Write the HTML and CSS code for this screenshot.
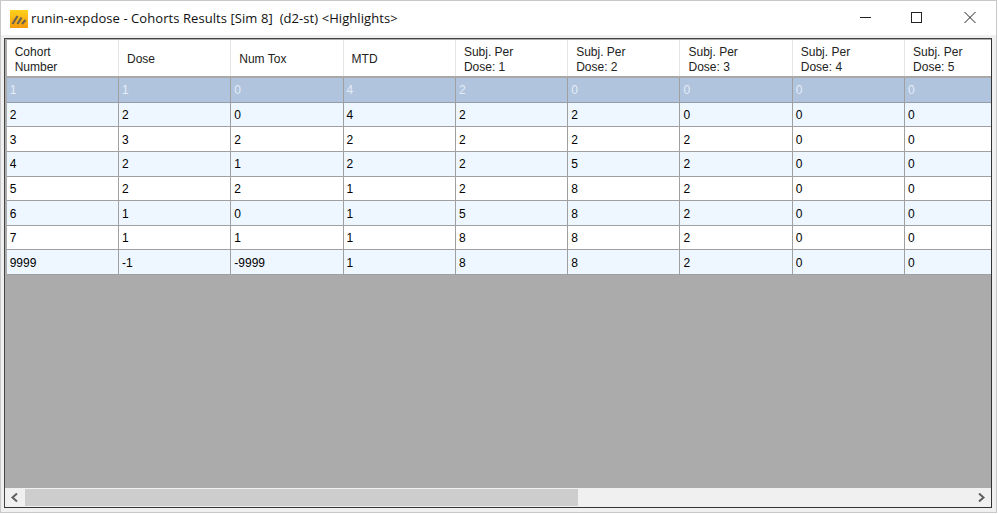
FILE: index.html
```html
<!DOCTYPE html>
<html lang="en">
<head>
<meta charset="utf-8">
<title>runin-expdose - Cohorts Results</title>
<link rel="stylesheet" href="styles.css">
</head>
<body>
<div class="window">
  <header class="titlebar">
    <svg class="app-icon" width="18" height="18" viewBox="0 0 18 18" aria-hidden="true">
      <defs><linearGradient id="g" x1="0" y1="0" x2="0" y2="1"><stop offset="0" stop-color="#ffd21c"/><stop offset="1" stop-color="#f59a0c"/></linearGradient></defs>
      <rect width="18" height="18" fill="url(#g)"/>
      <path d="M2.5 14 L7.5 6 M7.5 14 L11.5 7.5 M12 14 L15.5 10" stroke="#6b6250" stroke-width="2.2" fill="none"/>
    </svg>
    <span class="title">runin-expdose - Cohorts Results [Sim 8]&nbsp; (d2-st) &lt;Highlights&gt;</span>
    <div class="caption-buttons">
      <svg class="cap" width="51" height="34" viewBox="0 0 51 34" aria-hidden="true"><path d="M18 16.5 H29" stroke="#222" fill="none"/></svg>
      <svg class="cap" width="51" height="34" viewBox="0 0 51 34" aria-hidden="true"><rect x="18.5" y="11.5" width="10" height="10" stroke="#222" fill="none"/></svg>
      <svg class="cap" width="51" height="34" viewBox="0 0 51 34" aria-hidden="true"><path d="M20.5 11 L31.5 22 M31.5 11 L20.5 22" stroke="#222" fill="none"/></svg>
    </div>
  </header>
  <main class="frame">
    <div class="grid">
      <div class="row head">
        <div class="cell"><span>Cohort<br>Number</span></div>
        <div class="cell"><span>Dose</span></div>
        <div class="cell"><span>Num Tox</span></div>
        <div class="cell"><span>MTD</span></div>
        <div class="cell"><span>Subj. Per<br>Dose: 1</span></div>
        <div class="cell"><span>Subj. Per<br>Dose: 2</span></div>
        <div class="cell"><span>Subj. Per<br>Dose: 3</span></div>
        <div class="cell"><span>Subj. Per<br>Dose: 4</span></div>
        <div class="cell"><span>Subj. Per<br>Dose: 5</span></div>
      </div>
      <div class="row selected"><div class="cell">1</div><div class="cell">1</div><div class="cell">0</div><div class="cell">4</div><div class="cell">2</div><div class="cell">0</div><div class="cell">0</div><div class="cell">0</div><div class="cell">0</div></div>
      <div class="row alt"><div class="cell">2</div><div class="cell">2</div><div class="cell">0</div><div class="cell">4</div><div class="cell">2</div><div class="cell">2</div><div class="cell">0</div><div class="cell">0</div><div class="cell">0</div></div>
      <div class="row"><div class="cell">3</div><div class="cell">3</div><div class="cell">2</div><div class="cell">2</div><div class="cell">2</div><div class="cell">2</div><div class="cell">2</div><div class="cell">0</div><div class="cell">0</div></div>
      <div class="row alt"><div class="cell">4</div><div class="cell">2</div><div class="cell">1</div><div class="cell">2</div><div class="cell">2</div><div class="cell">5</div><div class="cell">2</div><div class="cell">0</div><div class="cell">0</div></div>
      <div class="row"><div class="cell">5</div><div class="cell">2</div><div class="cell">2</div><div class="cell">1</div><div class="cell">2</div><div class="cell">8</div><div class="cell">2</div><div class="cell">0</div><div class="cell">0</div></div>
      <div class="row alt"><div class="cell">6</div><div class="cell">1</div><div class="cell">0</div><div class="cell">1</div><div class="cell">5</div><div class="cell">8</div><div class="cell">2</div><div class="cell">0</div><div class="cell">0</div></div>
      <div class="row"><div class="cell">7</div><div class="cell">1</div><div class="cell">1</div><div class="cell">1</div><div class="cell">8</div><div class="cell">8</div><div class="cell">2</div><div class="cell">0</div><div class="cell">0</div></div>
      <div class="row alt"><div class="cell">9999</div><div class="cell">-1</div><div class="cell">-9999</div><div class="cell">1</div><div class="cell">8</div><div class="cell">8</div><div class="cell">2</div><div class="cell">0</div><div class="cell">0</div></div>
    </div>
    <div class="scrollbar">
      <svg class="arrow" width="20" height="19" viewBox="0 0 20 19" aria-hidden="true"><path d="M12 5.5 L7.5 9.5 L12 13.5" stroke="#606060" stroke-width="2" fill="none"/></svg>
      <div class="track"><div class="thumb"></div></div>
      <svg class="arrow" width="19" height="19" viewBox="0 0 19 19" aria-hidden="true"><path d="M7 5.5 L11.5 9.5 L7 13.5" stroke="#606060" stroke-width="2" fill="none"/></svg>
    </div>
  </main>
</div>
</body>
</html>
```
FILE: styles.css
```css
* { box-sizing: border-box; }
html, body { margin: 0; height: 100%; overflow: hidden; }
body { background: #fff; font-family: "Liberation Sans", Arial, sans-serif; }
.window {
  width: 997px;
  height: 513px;
  display: flex;
  flex-direction: column;
  background: #f0f0f0;
  border: 1px solid #c8c8c8;
  padding: 0 4px 4px 3px;
}
.titlebar {
  height: 34px;
  margin: 0 -4px 0 -3px;
  padding-left: 9px;
  background: #fff;
  display: flex;
  align-items: center;
  flex: none;
}
.app-icon { flex: none; margin-right: 3px; margin-top: 1px; }
.title { font-family: "Open Sans", sans-serif; font-size: 13px; letter-spacing: 0.07px; color: #111; white-space: nowrap; }
.caption-buttons { margin-left: auto; display: flex; margin-right: 1px; }
.cap { display: block; }
.frame {
  flex: 1;
  margin-top: 3px;
  border: 1px solid #444;
  border-right-color: #333;
  border-bottom-color: #333;
  background: #ababab;
  display: flex;
  flex-direction: column;
  overflow: hidden;
}
.grid { flex: 1; overflow: hidden; padding: 1px 0 0 1.7px; }
.row { display: flex; height: 24.65px; background: #fff; border-bottom: 1px solid #a0a0a0; }
.cell {
  flex: none;
  width: 112.3px;
  padding: 0 0 0 3px;
  border-right: 1px solid #a0a0a0;
  display: flex;
  align-items: center;
  font-size: 12px;
  color: #000;
  white-space: nowrap;
  padding-top: 1px;
}
.head { height: 38px; border-bottom: 2px solid #a8a8a8; }
.head .cell { border-right-color: #e4e4e4; padding-left: 8px; color: #222; line-height: 15px; padding-top: 3px; }
.selected { background: #b0c4de; border-bottom-color: #949ca8; }
.selected .cell { color: #e4ecf6; padding-top: 0; }
.alt { background: #eef7ff; }
.scrollbar {
  flex: none;
  height: 19px;
  background: #f0f0f0;
  display: flex;
  align-items: stretch;
}
.arrow { flex: none; display: block; }
.track { flex: 1; padding-top: 1px; }
.thumb { width: 553px; height: 17px; background: #cdcdcd; }
```
